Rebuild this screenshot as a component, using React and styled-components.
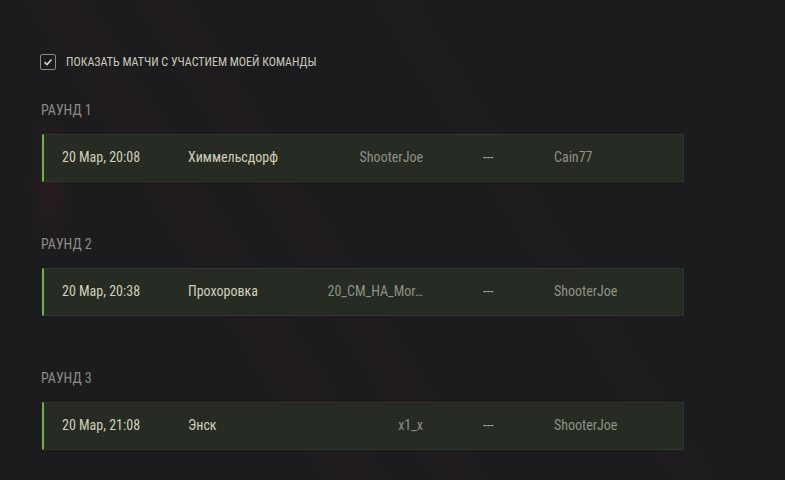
import React from "react"
import styled, { createGlobalStyle } from "styled-components"

const GlobalStyle = createGlobalStyle`
  html, body {
    margin: 0;
    padding: 0;
    background: #1c1c1f;
  }
  body {
    font-family: "Roboto Condensed", "Liberation Sans Narrow", Roboto, sans-serif;
  }
`

const Page = styled.div`
  width: 785px;
  height: 480px;
  overflow: hidden;
  box-sizing: border-box;
  padding: 54px 0 0 40px;
  background:
    radial-gradient(ellipse 30px 110px at 50px 180px, rgba(110, 30, 20, 0.16), transparent 70%),
    linear-gradient(58deg, transparent 0 30%, rgba(90, 25, 20, 0.05) 30% 36%, transparent 36% 40%, rgba(90, 25, 20, 0.05) 40% 45%, transparent 45% 62%, rgba(90, 30, 20, 0.04) 62% 66%, transparent 66%),
    #1c1c1f;
`

const Filter = styled.label`
  display: flex;
  align-items: center;
  gap: 10px;
  height: 16px;
  font-size: 12px;
  color: #c8c8b8;
  text-transform: uppercase;
`

const Box = styled.span`
  width: 14px;
  height: 14px;
  border: 1px solid #8c8c82;
  border-radius: 2px;
  display: flex;
  align-items: center;
  justify-content: center;
`

const Round = styled.section`
  width: 644px;
  margin-top: ${(p) => (p.$first ? "32px" : "54px")};
`

const RoundTitle = styled.h3`
  margin: 0 0 15px 1px;
  font-size: 14px;
  font-weight: 400;
  line-height: 17px;
  color: #8c8c84;
`

const Row = styled.div`
  display: grid;
  grid-template-columns: 126px 118px 117px 131px 1fr;
  align-items: center;
  height: 46px;
  padding-left: 18px;
  margin-left: 2px;
  background: rgba(40, 46, 38, 0.88);
  border: 1px solid #30352f;
  border-left: 2px solid #6fb14f;
  font-size: 14px;
  line-height: 16px;
`

const Cell = styled.span`
  color: ${(p) => (p.$muted ? "#8e9184" : "#d2d0bc")};
  text-align: ${(p) => (p.$right ? "right" : "left")};
  white-space: nowrap;
  padding-bottom: 2px;
`

const Dash = styled.span`
  color: #a8aa9c;
  padding-left: 60px;
  padding-bottom: 2px;
  white-space: nowrap;
`

const rounds = [
  { date: "20 Мар, 20:08", map: "Химмельсдорф", p1: "ShooterJoe", p2: "Cain77" },
  { date: "20 Мар, 20:38", map: "Прохоровка", p1: "20_CM_HA_Mor…", p2: "ShooterJoe" },
  { date: "20 Мар, 21:08", map: "Энск", p1: "x1_x", p2: "ShooterJoe" },
]

const App = () => {
  return (
    <>
      <GlobalStyle />
      <Page>
        <Filter>
          <Box>
            <svg width="10" height="10" viewBox="0 0 10 10">
              <path d="M1.5 5.2 L4 7.5 L8.5 2.5" fill="none" stroke="#d0d0c4" strokeWidth="1.6" />
            </svg>
          </Box>
          Показать матчи с участием моей команды
        </Filter>
        {rounds.map((r, i) => (
          <Round key={i} $first={i === 0}>
            <RoundTitle>РАУНД {i + 1}</RoundTitle>
            <Row>
              <Cell>{r.date}</Cell>
              <Cell>{r.map}</Cell>
              <Cell $muted $right>{r.p1}</Cell>
              <Dash>---</Dash>
              <Cell $muted>{r.p2}</Cell>
            </Row>
          </Round>
        ))}
      </Page>
    </>
  )
}

export default App
